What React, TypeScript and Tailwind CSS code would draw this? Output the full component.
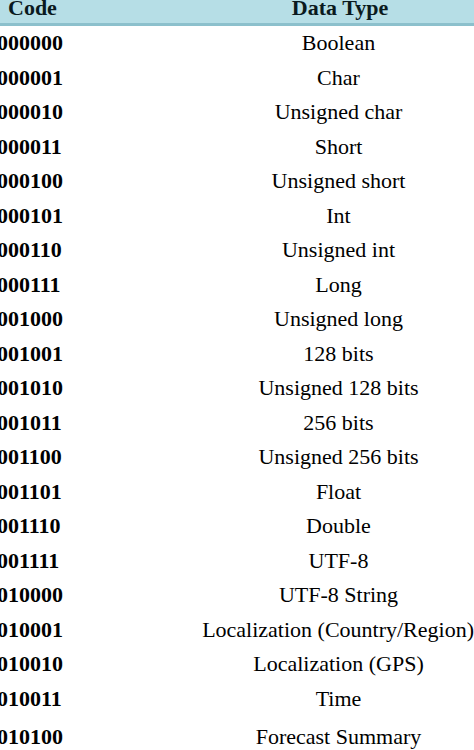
const rows: [string, string][] = [
  ["000000", "Boolean"],
  ["000001", "Char"],
  ["000010", "Unsigned char"],
  ["000011", "Short"],
  ["000100", "Unsigned short"],
  ["000101", "Int"],
  ["000110", "Unsigned int"],
  ["000111", "Long"],
  ["001000", "Unsigned long"],
  ["001001", "128 bits"],
  ["001010", "Unsigned 128 bits"],
  ["001011", "256 bits"],
  ["001100", "Unsigned 256 bits"],
  ["001101", "Float"],
  ["001110", "Double"],
  ["001111", "UTF-8"],
  ["010000", "UTF-8 String"],
  ["010001", "Localization (Country/Region)"],
  ["010010", "Localization (GPS)"],
  ["010011", "Time"],
  ["010100", "Forecast Summary"],
];

const App = () => {
  return (
    <div className="h-[750px] w-[474px] overflow-hidden bg-white font-['Liberation_Serif',serif] text-[22px] text-black">
      <div className="flex h-[26px] border-b-[3px] border-[#8cc0cc] bg-[#b6dee6] font-bold leading-[16px] text-[#0a1a1e]">
        <div className="w-[206px] pl-[8px]">Code</div>
        <div className="flex-1 text-center whitespace-nowrap">Data Type</div>
      </div>
      <div className="flex flex-col">
        {rows.map(([code, type], i) => (
          <div
            key={code}
            className={`flex h-[34.5px] leading-[34.5px] ${
              i === rows.length - 1 ? "mt-[4px]" : ""
            }`}
          >
            <div className="w-[206px] -ml-[3px] font-bold">{code}</div>
            <div className="flex-1 text-center whitespace-nowrap">{type}</div>
          </div>
        ))}
      </div>
    </div>
  );
};

export default App;
